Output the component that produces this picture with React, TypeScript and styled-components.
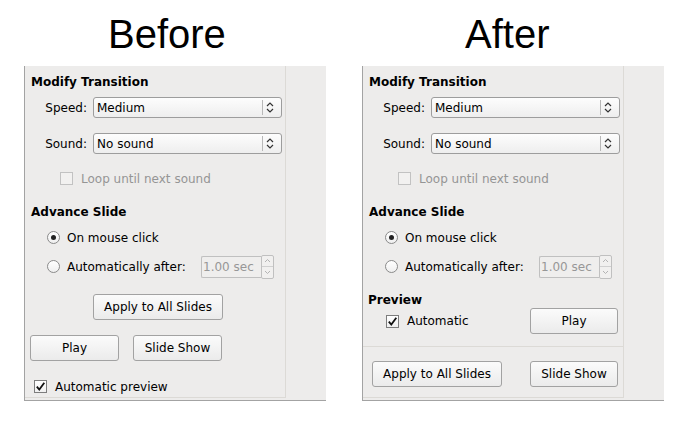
import React from "react";
import styled, { createGlobalStyle } from "styled-components";

const GlobalStyle = createGlobalStyle`
  html, body { margin: 0; padding: 0; background: #ffffff; }
  body {
    font-family: "DejaVu Sans", "Noto Sans", sans-serif;
    font-size: 12px;
    color: #000000;
  }
  * { box-sizing: border-box; }
`;

const Page = styled.div`
  display: flex;
  gap: 36px;
  padding-left: 24px;
  width: 699px;
  height: 444px;
`;

const Column = styled.div`
  display: flex;
  flex-direction: column;
  width: 302px;
`;

const Title = styled.h1<{ $indent: number }>`
  margin: 11px 0 9px ${(p) => p.$indent}px;
  font-family: "Liberation Sans", Arial, sans-serif;
  font-weight: 400;
  font-size: 40px;
  line-height: 46px;
  color: #000;
`;

const Panel = styled.div`
  display: flex;
  height: 335px;
  background: #edeceb;
  border-left: 1px solid #a3a3a3;
  border-bottom: 1px solid #a3a3a3;
  padding-bottom: 2px;
`;

const Main = styled.div`
  width: 261px;
  display: flex;
  flex-direction: column;
  padding: 9px 0 0 6px;
  border-right: 1px solid #dcdad6;
  border-bottom: 1px solid #dcdad6;
`;

const Side = styled.div`
  flex: 1;
`;

const Heading = styled.div<{ $mt: number; $ml?: number }>`
  margin-top: ${(p) => p.$mt}px;
  margin-left: ${(p) => p.$ml ?? 0}px;
  font-weight: 700;
  line-height: 14px;
  white-space: nowrap;
`;

const Row = styled.div<{ $mt: number; $ml?: number; $h: number; $pr?: number }>`
  display: flex;
  align-items: center;
  margin-top: ${(p) => p.$mt}px;
  margin-left: ${(p) => p.$ml ?? 0}px;
  padding-right: ${(p) => p.$pr ?? 0}px;
  height: ${(p) => p.$h}px;
`;

const FieldLabel = styled.span`
  width: 45px;
  margin-right: 6px;
  text-align: right;
  line-height: 14px;
  white-space: nowrap;
`;

const Select = styled.div`
  width: 189px;
  height: 21px;
  display: flex;
  align-items: center;
  border: 1px solid #9d9d9d;
  border-radius: 3px;
  background: linear-gradient(#fdfdfd, #eeeeee);
  padding-left: 3px;
`;

const SelectValue = styled.span`
  flex: 1;
  line-height: 14px;
  white-space: nowrap;
`;

const SelectArrows = styled.span`
  display: flex;
  align-items: center;
  height: 15px;
  width: 19px;
  padding-left: 3px;
  border-left: 1px solid #b8b8b8;
`;

const OptionText = styled.span<{ $disabled?: boolean; $w?: number }>`
  line-height: 14px;
  white-space: nowrap;
  color: ${(p) => (p.$disabled ? "#959595" : "#000")};
  ${(p) => (p.$w ? `min-width: ${p.$w}px;` : "")}
`;

const Box = styled.span<{ $disabled?: boolean }>`
  display: flex;
  align-items: center;
  justify-content: center;
  flex: none;
  width: 13px;
  height: 13px;
  margin-right: 8px;
  border: 1px solid ${(p) => (p.$disabled ? "#c2c2c2" : "#7d7d7d")};
  background: ${(p) => (p.$disabled ? "#f2f1f0" : "linear-gradient(#ffffff, #f0f0f0)")};
`;

const Radio = styled.span<{ $on?: boolean }>`
  display: flex;
  align-items: center;
  justify-content: center;
  flex: none;
  width: 13px;
  height: 13px;
  margin-right: 7px;
  border-radius: 50%;
  border: 1px solid #8a8a8a;
  background: linear-gradient(#ffffff, #efefef);
  &::after {
    content: "";
    display: ${(p) => (p.$on ? "block" : "none")};
    width: 5px;
    height: 5px;
    border-radius: 50%;
    background: #222;
  }
`;

const Spin = styled.div`
  display: flex;
  align-items: center;
`;

const SpinEntry = styled.div`
  width: 60px;
  height: 22px;
  display: flex;
  align-items: center;
  padding-left: 1px;
  border: 1px solid #c0c0c0;
  border-right: none;
  border-radius: 2px 0 0 2px;
  background: #efeeed;
  color: #979797;
  line-height: 14px;
  white-space: nowrap;
`;

const SpinButtons = styled.div`
  width: 13px;
  height: 24px;
  display: flex;
  flex-direction: column;
  border: 1px solid #c0c0c0;
  border-radius: 2px;
  background: #f1f0ef;
`;

const SpinHalf = styled.div<{ $top?: boolean }>`
  flex: 1;
  display: flex;
  align-items: center;
  justify-content: center;
  ${(p) => (p.$top ? "border-bottom: 1px solid #d0d0d0;" : "")}
`;

const Button = styled.button<{ $w: number; $ml?: number }>`
  width: ${(p) => p.$w}px;
  height: 26px;
  margin-left: ${(p) => (p.$ml === undefined ? 0 : p.$ml)}px;
  padding: 0;
  font: inherit;
  color: #000;
  border: 1px solid #a2a2a2;
  border-radius: 3px;
  background: linear-gradient(#fbfbfb, #ebebeb);
  line-height: 14px;
`;

const PushButton = styled(Button)`
  margin-left: auto;
`;

const Separator = styled.div`
  margin: 12px 0 0 -6px;
  height: 1px;
  background: #dcdad6;
`;

const Chevrons = () => (
  <svg width="8" height="13" viewBox="0 0 8 13" fill="none">
    <polyline points="1,5 4,2 7,5" stroke="#333" strokeWidth="1.2" />
    <polyline points="1,8 4,11 7,8" stroke="#333" strokeWidth="1.2" />
  </svg>
);

const Check = () => (
  <svg width="11" height="11" viewBox="0 0 11 11" fill="none">
    <path d="M1.8 5.6 L4.3 8.6 L9.3 1.8" stroke="#111" strokeWidth="1.8" />
  </svg>
);

const TinyArrow = ({ up }: { up?: boolean }) => (
  <svg width="7" height="5" viewBox="0 0 7 5" fill="none">
    <polyline points={up ? "1,4 3.5,1.5 6,4" : "1,1 3.5,3.5 6,1"} stroke="#b3b3b3" strokeWidth="1" />
  </svg>
);

const SelectField = ({ label, value, mt }: { label: string; value: string; mt: number }) => (
  <Row $mt={mt} $ml={11} $h={21}>
    <FieldLabel>{label}</FieldLabel>
    <Select>
      <SelectValue>{value}</SelectValue>
      <SelectArrows>
        <Chevrons />
      </SelectArrows>
    </Select>
  </Row>
);

const CommonTop = () => (
  <>
    <Heading $mt={0}>Modify Transition</Heading>
    <SelectField label="Speed:" value="Medium" mt={8} />
    <SelectField label="Sound:" value="No sound" mt={15} />
    <Row $mt={18} $ml={29} $h={13}>
      <Box $disabled />
      <OptionText $disabled>Loop until next sound</OptionText>
    </Row>
    <Heading $mt={20}>Advance Slide</Heading>
    <Row $mt={12} $ml={16} $h={13}>
      <Radio $on />
      <OptionText>On mouse click</OptionText>
    </Row>
    <Row $mt={11} $ml={16} $h={23}>
      <Radio />
      <OptionText $w={134}>Automatically after:</OptionText>
      <Spin>
        <SpinEntry>1.00 sec</SpinEntry>
        <SpinButtons>
          <SpinHalf $top>
            <TinyArrow up />
          </SpinHalf>
          <SpinHalf>
            <TinyArrow />
          </SpinHalf>
        </SpinButtons>
      </Spin>
    </Row>
  </>
);

export default function App() {
  return (
    <>
      <GlobalStyle />
      <Page>
        <Column>
          <Title $indent={84}>Before</Title>
          <Panel>
            <Main>
              <CommonTop />
              <Row $mt={16} $ml={62} $h={26}>
                <Button $w={130}>Apply to All Slides</Button>
              </Row>
              <Row $mt={15} $ml={-1} $h={26}>
                <Button $w={89}>Play</Button>
                <Button $w={89} $ml={14}>Slide Show</Button>
              </Row>
              <Row $mt={19} $ml={3} $h={13}>
                <Box>
                  <Check />
                </Box>
                <OptionText>Automatic preview</OptionText>
              </Row>
            </Main>
            <Side />
          </Panel>
        </Column>
        <Column>
          <Title $indent={103}>After</Title>
          <Panel>
            <Main>
              <CommonTop />
              <Heading $mt={15} $ml={-1}>Preview</Heading>
              <Row $mt={1} $ml={17} $h={26} $pr={5}>
                <Box>
                  <Check />
                </Box>
                <OptionText>Automatic</OptionText>
                <PushButton $w={88}>Play</PushButton>
              </Row>
              <Separator />
              <Row $mt={14} $ml={3} $h={26} $pr={5}>
                <Button $w={130}>Apply to All Slides</Button>
                <PushButton $w={88}>Slide Show</PushButton>
              </Row>
            </Main>
            <Side />
          </Panel>
        </Column>
      </Page>
    </>
  );
}
